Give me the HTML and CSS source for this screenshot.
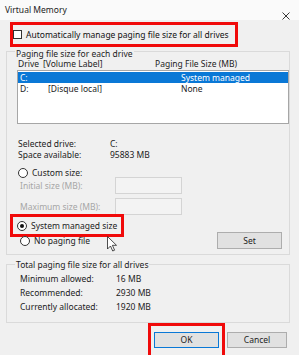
FILE: index.html
```html
<!DOCTYPE html>
<html>
<head>
<meta charset="utf-8">
<link rel="stylesheet" href="styles.css">
</head>
<body>
<div class="dialog">
  <div class="titlebar">
    <span class="title">Virtual Memory</span>
    <svg class="close" width="8" height="8" viewBox="0 0 8 8"><path d="M0.5 0.5L7.5 7.5M7.5 0.5L0.5 7.5" stroke="#222" stroke-width="0.9"/></svg>
  </div>

  <div class="auto-row">
    <div class="hl hl-auto">
      <span class="cb"></span>
      <span>Automatically manage paging file size for all drives</span>
    </div>
  </div>

  <div class="group g1">
    <span class="legend">Paging file size for each drive</span>
    <div class="list-head">
      <span class="c-drive">Drive</span><span class="c-label">[Volume Label]</span><span>Paging File Size (MB)</span>
    </div>
    <div class="listbox">
      <div class="lrow sel"><span class="l-drive">C:</span><span class="l-label"></span><span>System managed</span></div>
      <div class="lrow"><span class="l-drive">D:</span><span class="l-label">[Disque local]</span><span>None</span></div>
    </div>

    <div class="info">
      <div class="irow"><span class="ilabel">Selected drive:</span><span>C:</span></div>
      <div class="irow"><span class="ilabel">Space available:</span><span>95883 MB</span></div>
    </div>

    <div class="radio-row custom">
      <span class="radio"></span><span>Custom size:</span>
    </div>
    <div class="size-row first">
      <span class="slabel">Initial size (MB):</span><span class="input"></span>
    </div>
    <div class="size-row second">
      <span class="slabel">Maximum size (MB):</span><span class="input"></span>
    </div>

    <div class="bottom-row">
      <div class="bcol">
        <div class="hl hl-sys">
          <span class="radio on"></span><span>System managed size</span>
        </div>
        <div class="radio-row nopage">
          <span class="radio"></span><span>No paging file</span>
        </div>
      </div>
      <button class="btn set">Set</button>
    </div>
  </div>

  <div class="group g2">
    <span class="legend">Total paging file size for all drives</span>
    <div class="trow first"><span class="tlabel">Minimum allowed:</span><span>16 MB</span></div>
    <div class="trow"><span class="tlabel">Recommended:</span><span>2930 MB</span></div>
    <div class="trow"><span class="tlabel">Currently allocated:</span><span>1920 MB</span></div>
  </div>

  <div class="buttons">
    <div class="hl hl-ok">
      <button class="btn ok">OK</button>
    </div>
    <button class="btn cancel">Cancel</button>
  </div>

  <svg class="cursor" width="11" height="16" viewBox="0 0 11 16"><path d="M0.5 0.5V13L3.5 10L5.7 15L7.6 14.2L5.4 9.3H9.5Z" fill="#fff" stroke="#222" stroke-width="0.8" stroke-linejoin="round"/></svg>
</div>
</body>
</html>
```

FILE: styles.css
```css
* { box-sizing: border-box; }

html, body {
  margin: 0;
  padding: 0;
}

body {
  width: 299px;
  height: 355px;
  overflow: hidden;
  background: #f0f0f0;
  font-family: "Noto Sans", "Open Sans", sans-serif;
  font-size: 8.5px;
  color: #1c1c1c;
}

.dialog {
  position: relative;
  width: 299px;
  height: 355px;
  display: flex;
  flex-direction: column;
}

.titlebar {
  height: 20px;
  flex: none;
  background: #fafafa;
  display: flex;
  justify-content: space-between;
  align-items: flex-start;
}

.title {
  margin: 4px 0 0 5px;
  line-height: 12px;
  font-size: 8.5px;
  color: #222;
}

.close {
  margin: 12px 9px 0 0;
}

.hl {
  border: 3px solid #f00a0a;
  display: flex;
  align-items: center;
}

.auto-row {
  margin: 2px 0 0 10px;
  flex: none;
}

.hl-auto {
  width: 228px;
  height: 25px;
  padding-left: 0;
  gap: 4px;
  color: #111;
}

.cb {
  width: 9px;
  height: 9px;
  border: 1px solid #333;
  background: #fff;
  flex: none;
}

.group {
  flex: none;
  border: 1px solid #dadada;
  margin-left: 6px;
  width: 284px;
  display: flex;
  flex-direction: column;
}

.g1 {
  margin-top: 4px;
  height: 204px;
}

.legend {
  align-self: flex-start;
  background: #f0f0f0;
  line-height: 10px;
  margin: -3px 0 0 8px;
  padding: 0 1px;
}

.list-head {
  display: flex;
  line-height: 10px;
  height: 10px;
  padding-left: 11px;
}

.c-drive { width: 25px; }
.c-label { width: 112px; }

.listbox {
  margin: 1px 0 0 10px;
  width: 272px;
  height: 54px;
  background: #fff;
  border: 1px solid #a6a6a6;
  padding: 1px 0 0 0;
}

.lrow {
  display: flex;
  height: 11px;
  line-height: 11px;
  padding-left: 2px;
}

.lrow.sel {
  background: #0a78d6;
  color: #fff;
}

.l-drive { width: 28px; }
.l-label { width: 133px; }

.info {
  margin-top: 14px;
  padding-left: 11px;
}

.irow {
  display: flex;
  line-height: 11px;
  height: 11px;
}

.ilabel { width: 92px; }

.radio-row {
  display: flex;
  align-items: center;
  gap: 4px;
  height: 11px;
}

.custom {
  margin: 7px 0 0 11px;
}

.radio {
  width: 10px;
  height: 10px;
  border-radius: 50%;
  border: 1px solid #333;
  background: #fff;
  flex: none;
  position: relative;
}

.radio.on::after {
  content: "";
  position: absolute;
  left: 2px;
  top: 2px;
  width: 4px;
  height: 4px;
  border-radius: 50%;
  background: #111;
}

.size-row {
  display: flex;
  align-items: center;
  height: 17px;
  padding-left: 13px;
  color: #a6a6a6;
}

.size-row.first { margin-top: -1px; }
.size-row.second { margin-top: 4px; }

.slabel { width: 95px; }

.input {
  width: 67px;
  height: 17px;
  border: 1px solid #d4d4d4;
  background: #f3f3f3;
}

.bottom-row {
  display: flex;
  align-items: flex-start;
  margin-top: -1px;
}

.bcol {
  display: flex;
  flex-direction: column;
  margin-left: 3px;
}

.hl-sys {
  width: 114px;
  height: 23px;
  padding-left: 4px;
  gap: 4px;
}

.nopage {
  margin: -2px 0 0 10px;
}

.btn {
  font-family: inherit;
  font-size: 8.5px;
  color: #1c1c1c;
  background: #e1e1e1;
  border: 1px solid #adadad;
  padding: 0;
  line-height: 14px;
}

.set {
  margin: 18px 7px 0 auto;
  width: 65px;
  height: 17px;
}

.g2 {
  margin-top: 9px;
  height: 59px;
}

.g2 .legend {
  margin-top: -5px;
}

.trow {
  display: flex;
  height: 14px;
  line-height: 14px;
  padding-left: 13px;
}

.trow.first { margin-top: 2px; }

.tlabel { width: 96px; }

.buttons {
  display: flex;
  align-items: flex-start;
  margin-left: 148px;
  flex: none;
}

.hl-ok {
  width: 77px;
  height: 35px;
  align-items: flex-start;
  padding: 6px 0 0 3px;
}

.ok {
  width: 65px;
  height: 16px;
  border: 1px solid #0a78d6;
}

.cancel {
  margin: 9px 0 0 2px;
  width: 60px;
  height: 16px;
}

.cursor {
  position: absolute;
  left: 107px;
  top: 236px;
}
```
